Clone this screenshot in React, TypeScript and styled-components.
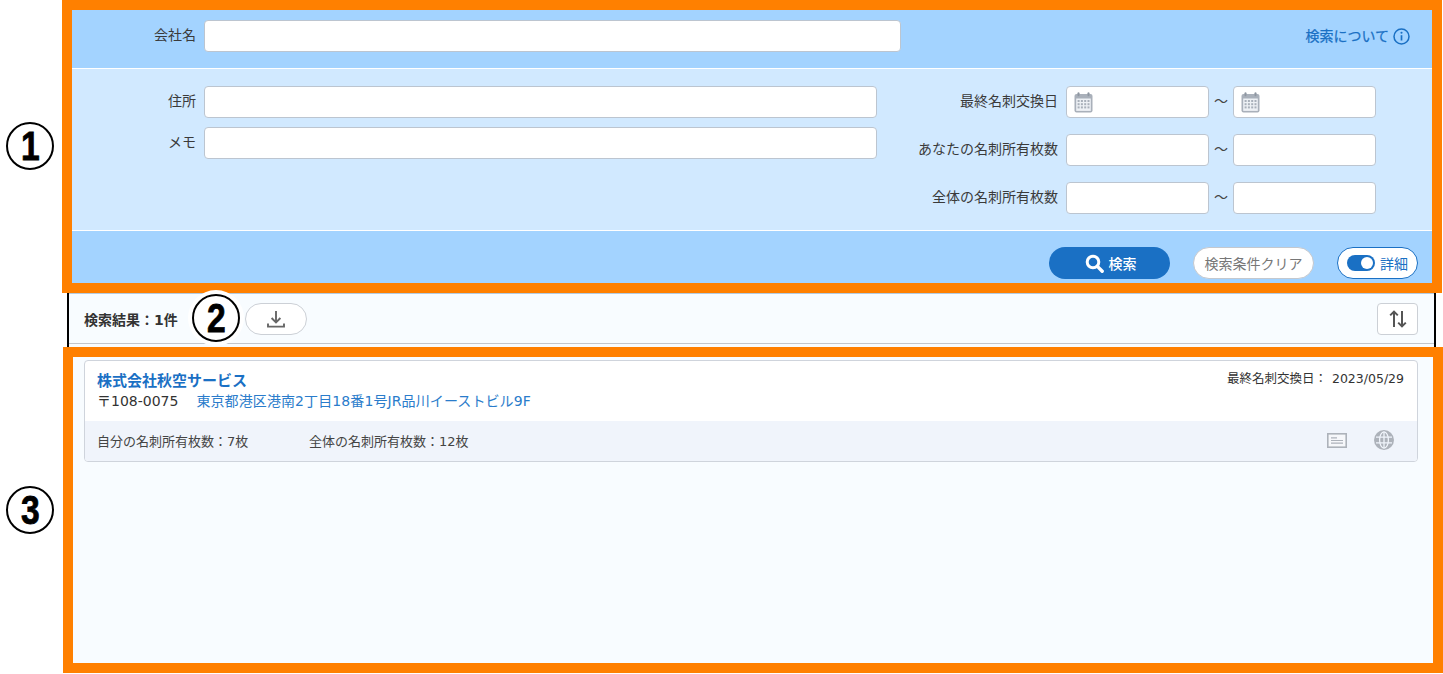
import React from "react";
import styled, { createGlobalStyle } from "styled-components";

const FONT = `"DejaVu Sans", "Noto Sans CJK JP", sans-serif`;

const Global = createGlobalStyle`
  html, body { margin: 0; padding: 0; background: #fff; }
  body { font-family: ${FONT}; color: #333; overflow: hidden; }
  * { box-sizing: border-box; }
`;

const Stage = styled.div`
  position: relative;
  width: 1443px;
  height: 674px;
  padding-left: 67px;
  padding-right: 7px;
`;

const AppFrame = styled.main`
  height: 673px;
  display: flex;
  flex-direction: column;
  border-left: 2px solid #000;
  border-right: 2px solid #000;
  background: #f8fcff;
`;

const SearchPanel = styled.section`
  flex: none;
  height: 294px;
  display: flex;
  flex-direction: column;
  background: #a3d3ff;
  border-bottom: 1px solid #b5cbe0;
`;

const CompanyRow = styled.div`
  height: 68px;
  flex: none;
  display: flex;
  align-items: flex-start;
  padding: 20px 24px 0 0;
`;

const Label = styled.label<{ $w: number }>`
  width: ${(p) => p.$w}px;
  flex: none;
  height: 32px;
  text-align: right;
  padding-right: 8px;
  font-size: 14px;
  line-height: 31px;
  color: #3a3a3a;
  white-space: nowrap;
`;

const TextInput = styled.div<{ $w: number }>`
  width: ${(p) => p.$w}px;
  height: 32px;
  flex: none;
  display: flex;
  align-items: center;
  padding-left: 7px;
  background: #fff;
  border: 1px solid #bcc5d0;
  border-radius: 4px;
`;

const HelpLink = styled.a`
  margin-left: auto;
  height: 32px;
  display: flex;
  align-items: center;
  gap: 4px;
  font-size: 14px;
  font-weight: 400;
  line-height: 30px;
  color: #1a70c4;
  white-space: nowrap;
  -webkit-text-stroke: 0.25px #1a70c4;
`;

const DetailArea = styled.div`
  height: 163px;
  flex: none;
  display: flex;
  background: #d1e9ff;
  border-top: 1px solid #fff;
  border-bottom: 1px solid #fff;
  padding-top: 17px;
`;

const LeftFields = styled.div`
  width: 808px;
  flex: none;
  display: flex;
  flex-direction: column;
  gap: 9px;
`;

const RightFields = styled.div`
  display: flex;
  flex-direction: column;
  gap: 16px;
`;

const FieldRow = styled.div`
  display: flex;
  align-items: center;
`;

const Tilde = styled.span`
  width: 24px;
  height: 32px;
  flex: none;
  text-align: center;
  font-size: 14px;
  line-height: 30px;
  color: #444;
`;

const ActionBar = styled.div`
  flex: 1;
  display: flex;
  align-items: flex-start;
  justify-content: flex-end;
  padding: 16px 16px 0 0;
`;

const PrimaryButton = styled.button`
  width: 121px;
  height: 32px;
  margin-right: 23px;
  display: flex;
  align-items: center;
  justify-content: center;
  gap: 5px;
  padding: 0 0 0 2px;
  border: none;
  border-radius: 16px;
  background: #1a70c4;
  color: #fff;
  font: 500 14px ${FONT};
`;

const ClearButton = styled.button`
  width: 121px;
  height: 32px;
  margin-right: 23px;
  padding: 0;
  border: 1px solid #c4c8ce;
  border-radius: 16px;
  background: #fff;
  color: #777;
  font: 400 14px ${FONT};
`;

const DetailToggle = styled.button`
  width: 81px;
  height: 32px;
  display: flex;
  align-items: center;
  gap: 5px;
  padding: 0 0 0 9px;
  border: 1px solid #1a70c4;
  border-radius: 16px;
  background: #fff;
  color: #1a70c4;
  font: 400 14px ${FONT};
`;

const ToggleTrack = styled.span`
  width: 28px;
  height: 16px;
  display: flex;
  align-items: center;
  justify-content: flex-end;
  padding-right: 2px;
  border-radius: 8px;
  background: #1a70c4;
`;

const ToggleKnob = styled.span`
  width: 12px;
  height: 12px;
  border-radius: 50%;
  background: #fff;
`;

const ResultBar = styled.div`
  height: 50px;
  flex: none;
  display: flex;
  align-items: flex-start;
  padding: 9px 16px 0 15px;
  border-bottom: 1px solid #c2c6cc;
`;

const ResultCount = styled.strong`
  width: 161px;
  flex: none;
  font-size: 14px;
  font-weight: 700;
  line-height: 34px;
  color: #333;
  white-space: nowrap;
`;

const DownloadButton = styled.button`
  width: 62px;
  height: 32px;
  display: flex;
  align-items: center;
  justify-content: center;
  padding: 0;
  background: #fff;
  border: 1px solid #ccd0d6;
  border-radius: 16px;
`;

const SortButton = styled.button`
  margin-left: auto;
  width: 41px;
  height: 32px;
  display: flex;
  align-items: center;
  justify-content: center;
  padding: 0;
  background: #fff;
  border: 1px solid #ccd0d6;
  border-radius: 4px;
`;

const ResultList = styled.div`
  flex: 1;
  padding: 16px 16px 0 15px;
`;

const Card = styled.article`
  height: 102px;
  display: flex;
  flex-direction: column;
  overflow: hidden;
  background: #fff;
  border: 1px solid #cfd4dc;
  border-radius: 4px;
`;

const CardBody = styled.div`
  position: relative;
  height: 60px;
  flex: none;
  padding: 10px 12px 0;
`;

const CompanyName = styled.a`
  display: block;
  font-size: 15px;
  font-weight: 700;
  line-height: 20px;
  color: #1a70c4;
  white-space: nowrap;
`;

const AddressLine = styled.div`
  display: flex;
  gap: 18px;
  font-size: 14px;
  line-height: 20px;
  white-space: nowrap;
  color: #333;
`;

const AddressLink = styled.a`
  color: #2a7ccb;
  letter-spacing: 0.1px;
`;

const ExchangeDate = styled.div`
  position: absolute;
  top: 9px;
  right: 13px;
  display: flex;
  gap: 5px;
  font-size: 12.5px;
  line-height: 18px;
  color: #333;
  white-space: nowrap;
`;

const CardFooter = styled.div`
  flex: 1;
  display: flex;
  align-items: center;
  padding: 0 23px 2px 12px;
  background: #f0f4fb;
  font-size: 13px;
  color: #444;
  white-space: nowrap;
`;

const CountOwn = styled.span`
  width: 212px;
  flex: none;
`;

const FooterIcons = styled.div`
  margin-left: auto;
  display: flex;
  align-items: center;
  gap: 27px;
`;

const Frame = styled.div<{ $x: number; $y: number; $w: number; $h: number }>`
  position: absolute;
  left: ${(p) => p.$x}px;
  top: ${(p) => p.$y}px;
  width: ${(p) => p.$w}px;
  height: ${(p) => p.$h}px;
  border: 10px solid #ff8000;
  pointer-events: none;
`;

const Marker = styled.div<{ $x: number; $y: number; $halo?: boolean }>`
  position: absolute;
  left: ${(p) => p.$x}px;
  top: ${(p) => p.$y}px;
  width: 48px;
  height: 48px;
  display: flex;
  align-items: center;
  justify-content: center;
  border: 2px solid #000;
  border-radius: 50%;
  background: #fff;
  box-shadow: ${(p) => (p.$halo ? "0 0 0 4px #fff" : "none")};
`;

const MarkerDigit = styled.span`
  display: block;
  font: 700 41px/1 "Liberation Sans", Arial, sans-serif;
  color: #000;
  transform: scaleX(0.82);
  -webkit-text-stroke: 0.8px #000;
`;

const InfoIcon = () => (
  <svg width="17" height="17" viewBox="0 0 17 17" fill="none" stroke="#1a70c4">
    <circle cx="8.5" cy="8.5" r="7.5" strokeWidth="1.5" />
    <path d="M8.5 7.2v5.3" strokeWidth="1.7" />
    <circle cx="8.5" cy="4.8" r="1.05" fill="#1a70c4" stroke="none" />
  </svg>
);

const CalendarIcon = () => (
  <svg width="19" height="21" viewBox="0 0 19 21">
    <rect x="0.5" y="2" width="18" height="18.5" rx="2" fill="#a9b0ba" />
    <rect x="2.2" y="6.5" width="14.6" height="12.4" fill="#eef1f5" />
    <rect x="3.5" y="0.3" width="2" height="4" rx="1" fill="#8f97a2" />
    <rect x="13.5" y="0.3" width="2" height="4" rx="1" fill="#8f97a2" />
    <g fill="#a9b0ba">
      {[8, 11.2, 14.4].map((y) =>
        [3.6, 6.9, 10.2, 13.5].map((x) => <rect key={`${x}-${y}`} x={x} y={y} width="2" height="2" />)
      )}
    </g>
  </svg>
);

const SearchIcon = () => (
  <svg width="19" height="19" viewBox="0 0 19 19" fill="none" stroke="#fff">
    <circle cx="8" cy="8" r="5.8" strokeWidth="3" />
    <path d="M12.4 12.4 17.2 17.2" strokeWidth="3.4" strokeLinecap="round" />
  </svg>
);

const DownloadIcon = () => (
  <svg width="20" height="20" viewBox="0 0 20 20" fill="none" stroke="#666" strokeWidth="1.9">
    <path d="M10 2v11.2M5.6 9 10 13.4 14.4 9" />
    <path d="M2 14.6v3h16v-3" />
  </svg>
);

const SortIcon = () => (
  <svg width="20" height="20" viewBox="0 0 20 20" fill="none" stroke="#555" strokeWidth="2">
    <path d="M6 18V2.6M2.2 6.4 6 2.6l3.8 3.8" />
    <path d="M14 2v15.4M10.2 13.6 14 17.4l3.8-3.8" />
  </svg>
);

const CardIcon = () => (
  <svg width="20" height="15" viewBox="0 0 20 15" fill="none">
    <rect x="0.8" y="0.8" width="18.4" height="13.4" fill="#f6f7fa" stroke="#adb2ba" strokeWidth="1.6" />
    <path d="M4 4.8h6M4 7.5h12M4 10.2h12" stroke="#adb2ba" strokeWidth="1.2" />
  </svg>
);

const GlobeIcon = () => (
  <svg width="20" height="20" viewBox="0 0 20 20" fill="none">
    <circle cx="10" cy="10" r="10" fill="#adb2ba" />
    <g stroke="#f0f4fb" strokeWidth="1.3">
      <ellipse cx="10" cy="10" rx="4.4" ry="8.2" />
      <path d="M10 1.8v16.4M2 7.2h16M2 12.8h16" />
    </g>
  </svg>
);

const DateField = () => (
  <TextInput $w={143}>
    <CalendarIcon />
  </TextInput>
);

const PlainField = () => <TextInput $w={143} />;

const RangeRow = ({ label, date }: { label: string; date?: boolean }) => (
  <FieldRow>
    <Label $w={189}>{label}</Label>
    {date ? <DateField /> : <PlainField />}
    <Tilde>～</Tilde>
    {date ? <DateField /> : <PlainField />}
  </FieldRow>
);

export default function App() {
  return (
    <Stage>
      <Global />
      <AppFrame>
        <SearchPanel>
          <CompanyRow>
            <Label $w={135}>会社名</Label>
            <TextInput $w={697} />
            <HelpLink>
              検索について
              <InfoIcon />
            </HelpLink>
          </CompanyRow>
          <DetailArea>
            <LeftFields>
              <FieldRow>
                <Label $w={135}>住所</Label>
                <TextInput $w={673} />
              </FieldRow>
              <FieldRow>
                <Label $w={135}>メモ</Label>
                <TextInput $w={673} />
              </FieldRow>
            </LeftFields>
            <RightFields>
              <RangeRow label="最終名刺交換日" date />
              <RangeRow label="あなたの名刺所有枚数" />
              <RangeRow label="全体の名刺所有枚数" />
            </RightFields>
          </DetailArea>
          <ActionBar>
            <PrimaryButton>
              <SearchIcon />
              検索
            </PrimaryButton>
            <ClearButton>検索条件クリア</ClearButton>
            <DetailToggle>
              <ToggleTrack>
                <ToggleKnob />
              </ToggleTrack>
              詳細
            </DetailToggle>
          </ActionBar>
        </SearchPanel>
        <ResultBar>
          <ResultCount>検索結果：1件</ResultCount>
          <DownloadButton>
            <DownloadIcon />
          </DownloadButton>
          <SortButton>
            <SortIcon />
          </SortButton>
        </ResultBar>
        <ResultList>
          <Card>
            <CardBody>
              <CompanyName>株式会社秋空サービス</CompanyName>
              <AddressLine>
                <span>〒108-0075</span>
                <AddressLink>東京都港区港南2丁目18番1号JR品川イーストビル9F</AddressLink>
              </AddressLine>
              <ExchangeDate>
                <span>最終名刺交換日：</span>
                <span>2023/05/29</span>
              </ExchangeDate>
            </CardBody>
            <CardFooter>
              <CountOwn>自分の名刺所有枚数：7枚</CountOwn>
              <span>全体の名刺所有枚数：12枚</span>
              <FooterIcons>
                <CardIcon />
                <GlobeIcon />
              </FooterIcons>
            </CardFooter>
          </Card>
        </ResultList>
      </AppFrame>
      <Frame $x={62} $y={0} $w={1380} $h={293} />
      <Frame $x={63} $y={347} $w={1380} $h={326} />
      <Marker $x={6} $y={122}>
        <MarkerDigit>1</MarkerDigit>
      </Marker>
      <Marker $x={192} $y={294} $halo>
        <MarkerDigit>2</MarkerDigit>
      </Marker>
      <Marker $x={6} $y={486}>
        <MarkerDigit>3</MarkerDigit>
      </Marker>
    </Stage>
  );
}
